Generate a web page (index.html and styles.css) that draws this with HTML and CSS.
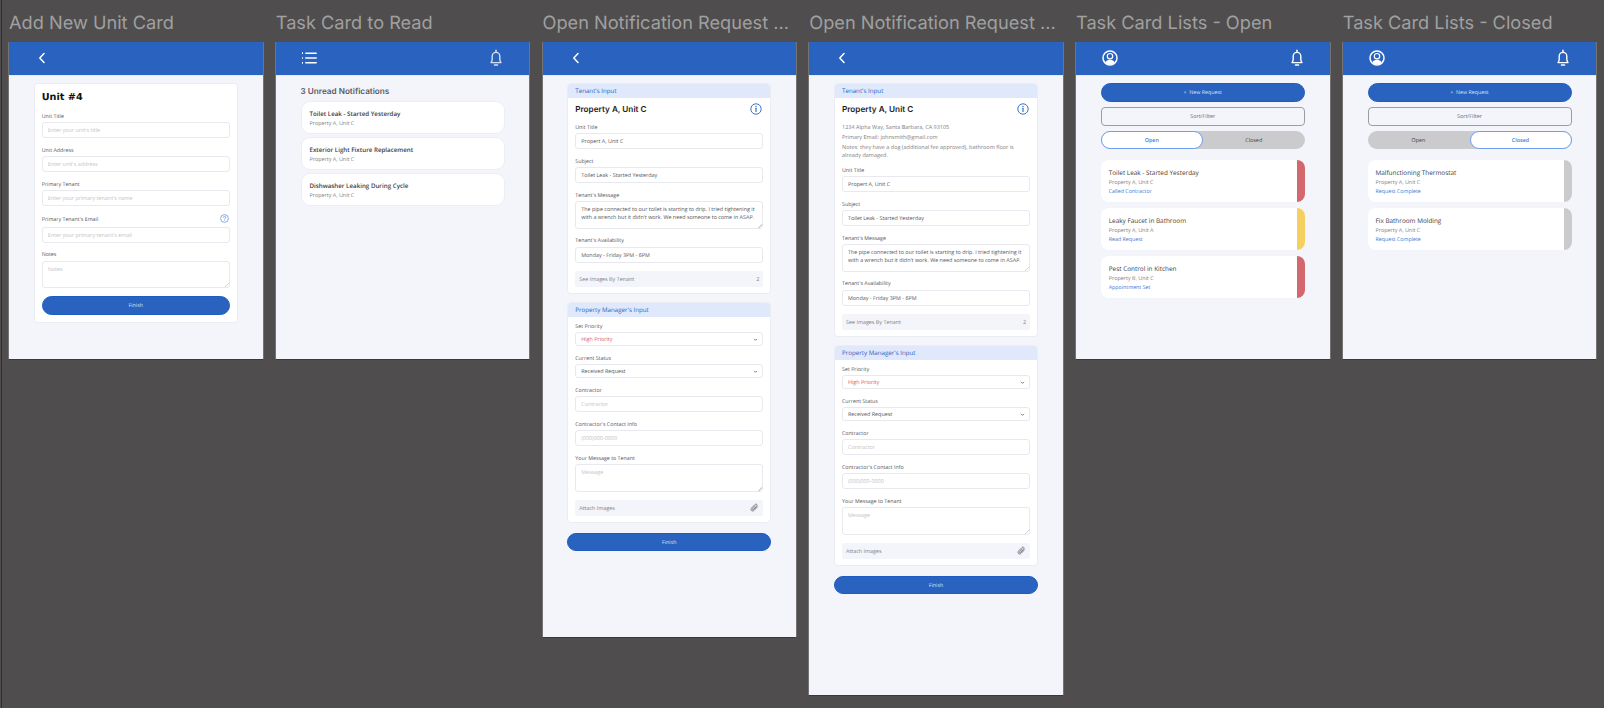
FILE: index.html
```html
<!DOCTYPE html>
<html lang="en">
<head>
    <meta charset="UTF-8">
    <title>Property Manager Screens</title>
    <link rel="stylesheet" href="styles.css">
</head>
<body>
    <svg class="sprites" aria-hidden="true">
        <symbol id="i-back" viewBox="0 0 14 14"><path d="M9 2.500 4.800 7 9 11.500" fill="none" stroke="currentColor" stroke-width="1.500" stroke-linecap="round" stroke-linejoin="round"/></symbol>
        <symbol id="i-list" viewBox="0 0 16 14"><path d="M4.800 2.200h10.400M4.800 7h10.400M4.800 11.800h10.400" fill="none" stroke="currentColor" stroke-width="1.500" stroke-linecap="round"/><path d="M1 2.200h1M1 7h1M1 11.800h1" fill="none" stroke="currentColor" stroke-width="1.700"/></symbol>
        <symbol id="i-bell" viewBox="0 0 14 18"><path d="M2 13.600c.8-.9 1.200-1.700 1.200-3.400V7.200a3.800 3.800 0 0 1 7.600 0v3c0 1.700.4 2.500 1.200 3.400z" fill="none" stroke="currentColor" stroke-width="1.400" stroke-linejoin="round"/><path d="M7 1.200v1.800" stroke="currentColor" stroke-width="1.400" stroke-linecap="round"/><path d="M5.600 16h2.800" stroke="currentColor" stroke-width="1.700" stroke-linecap="round"/></symbol>
        <symbol id="i-user" viewBox="0 0 16 16"><circle cx="8" cy="8" r="7" fill="none" stroke="currentColor" stroke-width="1.500"/><circle cx="8" cy="6.200" r="2.700" fill="none" stroke="currentColor" stroke-width="1.200"/><path d="M3.300 12.400c.7-1.800 2.500-2.700 4.700-2.700s4 .9 4.700 2.700A6.500 6.500 0 0 1 8 14.500a6.500 6.500 0 0 1-4.700-2.100z" fill="currentColor"/></symbol>
        <symbol id="i-info" viewBox="0 0 12 12"><circle cx="6" cy="6" r="5.200" fill="none" stroke="currentColor" stroke-width=".9"/><path d="M6 5.300v3.200" stroke="currentColor" stroke-width="1.100" stroke-linecap="round"/><circle cx="6" cy="3.500" r=".7" fill="currentColor"/></symbol>
        <symbol id="i-help" viewBox="0 0 12 12"><circle cx="6" cy="6" r="5.200" fill="none" stroke="currentColor" stroke-width=".8"/><path d="M4.400 4.700a1.600 1.500 0 1 1 2.400 1.300c-.6.300-.8.600-.8 1.200" fill="none" stroke="currentColor" stroke-width=".9"/><circle cx="6" cy="8.800" r=".55" fill="currentColor"/></symbol>
        <symbol id="i-clip" viewBox="0 0 10 10"><path d="M8.300 4.300 4.600 8.100c-1 1-2.300 1-3 .3s-.7-2 .3-3l3.500-3.600c.7-.7 1.600-.7 2.100-.2s.5 1.400-.2 2.100L3.900 7.200c-.3.300-.8.300-1 .1s-.2-.7.100-1l3-3.100" fill="none" stroke="currentColor" stroke-width="1" stroke-linecap="round"/></symbol>
        <symbol id="i-down" viewBox="0 0 6 6"><path d="M1.200 2.200 3 4l1.800-1.800" fill="none" stroke="currentColor" stroke-width=".9"/></symbol>
    </svg>

    <main class="canvas">
        <!-- Add New Unit Card -->
        <section class="frame">
            <h2 class="frame-title">Add New Unit Card</h2>
            <div class="screen screen-short">
                <header class="topbar"><svg class="icon"><use href="#i-back"/></svg></header>
                <div class="body">
                    <form class="card unit-card">
                        <h3 class="unit-name">Unit #4</h3>
                        <div class="field"><label>Unit Title</label><input placeholder="Enter your unit's title"></div>
                        <div class="field"><label>Unit Address</label><input placeholder="Enter unit's address"></div>
                        <div class="field"><label>Primary Tenant</label><input placeholder="Enter your primary tenant's name"></div>
                        <div class="field"><label class="with-help">Primary Tenant's Email <svg class="help"><use href="#i-help"/></svg></label><input placeholder="Enter your primary tenant's email"></div>
                        <div class="field"><label>Notes</label><textarea placeholder="Notes"></textarea></div>
                        <button type="button" class="btn-primary">Finish</button>
                    </form>
                </div>
            </div>
        </section>

        <!-- Task Card to Read -->
        <section class="frame">
            <h2 class="frame-title">Task Card to Read</h2>
            <div class="screen screen-short">
                <header class="topbar"><svg class="icon icon-list"><use href="#i-list"/></svg><svg class="icon icon-bell bell-dim"><use href="#i-bell"/></svg></header>
                <div class="body">
                    <h3 class="unread-title">3 Unread Notifications</h3>
                    <div class="notice"><div class="task-name">Toilet Leak - Started Yesterday</div><div class="task-unit">Property A, Unit C</div></div>
                    <div class="notice"><div class="task-name">Exterior Light Fixture Replacement</div><div class="task-unit">Property A, Unit C</div></div>
                    <div class="notice"><div class="task-name">Dishwasher Leaking During Cycle</div><div class="task-unit">Property A, Unit C</div></div>
                </div>
            </div>
        </section>

        <!-- Open Notification Request -->
        <section class="frame">
            <h2 class="frame-title">Open Notification Request ...</h2>
            <div class="screen screen-long">
                <header class="topbar"><svg class="icon"><use href="#i-back"/></svg></header>
                <div class="body">
                    <div class="card panel">
                        <div class="panel-head">Tenant's Input</div>
                        <div class="panel-body">
                            <div class="prop-row"><h3 class="prop-name">Property A, Unit C</h3><svg class="info"><use href="#i-info"/></svg></div>
                            <div class="field"><label>Unit Title</label><input value="Propert A, Unit C"></div>
                            <div class="field"><label>Subject</label><input value="Toilet Leak - Started Yesterday"></div>
                            <div class="field"><label>Tenant's Message</label><textarea>The pipe connected to our toilet is starting to drip. I tried tightening it with a wrench but it didn't work. We need someone to come in ASAP.</textarea></div>
                            <div class="field"><label>Tenant's Availability</label><input value="Monday - Friday 3PM - 6PM"></div>
                            <div class="attach"><span>See Images By Tenant</span><span>2</span></div>
                        </div>
                    </div>
                    <div class="card panel">
                        <div class="panel-head">Property Manager's Input</div>
                        <div class="panel-body">
                            <div class="field field-select"><label>Set Priority</label><div class="select-wrap"><select class="high"><option>High Priority</option></select><svg class="caret"><use href="#i-down"/></svg></div></div>
                            <div class="field field-select"><label>Current Status</label><div class="select-wrap"><select><option>Received Request</option></select><svg class="caret"><use href="#i-down"/></svg></div></div>
                            <div class="field"><label>Contractor</label><input placeholder="Contractor"></div>
                            <div class="field"><label>Contractor's Contact Info</label><input placeholder="(000)000-0000"></div>
                            <div class="field"><label>Your Message to Tenant</label><textarea placeholder="Message"></textarea></div>
                            <div class="attach"><span>Attach Images</span><svg class="clip"><use href="#i-clip"/></svg></div>
                        </div>
                    </div>
                    <button type="button" class="btn-primary">Finish</button>
                </div>
            </div>
        </section>

        <!-- Same screen with the info panel opened -->
        <section class="frame">
            <h2 class="frame-title">Open Notification Request ...</h2>
            <div class="screen screen-longest">
                <header class="topbar"><svg class="icon"><use href="#i-back"/></svg></header>
                <div class="body">
                    <div class="card panel">
                        <div class="panel-head">Tenant's Input</div>
                        <div class="panel-body">
                            <div class="prop-row"><h3 class="prop-name">Property A, Unit C</h3><svg class="info"><use href="#i-info"/></svg></div>
                            <div class="prop-info">
                                <p>1234 Alpha Way, Santa Barbara, CA 93105</p>
                                <p>Primary Email: johnsmith@gmail.com</p>
                                <p>Notes: they have a dog (additional fee approved), bathroom floor is already damaged.</p>
                            </div>
                            <div class="field"><label>Unit Title</label><input value="Propert A, Unit C"></div>
                            <div class="field"><label>Subject</label><input value="Toilet Leak - Started Yesterday"></div>
                            <div class="field"><label>Tenant's Message</label><textarea>The pipe connected to our toilet is starting to drip. I tried tightening it with a wrench but it didn't work. We need someone to come in ASAP.</textarea></div>
                            <div class="field"><label>Tenant's Availability</label><input value="Monday - Friday 3PM - 6PM"></div>
                            <div class="attach"><span>See Images By Tenant</span><span>2</span></div>
                        </div>
                    </div>
                    <div class="card panel">
                        <div class="panel-head">Property Manager's Input</div>
                        <div class="panel-body">
                            <div class="field field-select"><label>Set Priority</label><div class="select-wrap"><select class="high"><option>High Priority</option></select><svg class="caret"><use href="#i-down"/></svg></div></div>
                            <div class="field field-select"><label>Current Status</label><div class="select-wrap"><select><option>Received Request</option></select><svg class="caret"><use href="#i-down"/></svg></div></div>
                            <div class="field"><label>Contractor</label><input placeholder="Contractor"></div>
                            <div class="field"><label>Contractor's Contact Info</label><input placeholder="(000)000-0000"></div>
                            <div class="field"><label>Your Message to Tenant</label><textarea placeholder="Message"></textarea></div>
                            <div class="attach"><span>Attach Images</span><svg class="clip"><use href="#i-clip"/></svg></div>
                        </div>
                    </div>
                    <button type="button" class="btn-primary">Finish</button>
                </div>
            </div>
        </section>

        <!-- Task Card Lists - Open -->
        <section class="frame">
            <h2 class="frame-title">Task Card Lists - Open</h2>
            <div class="screen screen-short">
                <header class="topbar"><svg class="icon icon-user"><use href="#i-user"/></svg><svg class="icon icon-bell"><use href="#i-bell"/></svg></header>
                <div class="body body-list">
                    <button type="button" class="btn-primary btn-new">+&nbsp;&nbsp;New Request</button>
                    <button type="button" class="btn-sort">Sort/Filter</button>
                    <div class="toggle"><span class="toggle-item active">Open</span><span class="toggle-item">Closed</span></div>
                    <div class="task"><div class="task-text"><div class="task-name">Toilet Leak - Started Yesterday</div><div class="task-unit">Property A, Unit C</div><div class="task-status">Called Contractor</div></div><div class="flag flag-red"></div></div>
                    <div class="task"><div class="task-text"><div class="task-name">Leaky Faucet in Bathroom</div><div class="task-unit">Property A, Unit A</div><div class="task-status">Read Request</div></div><div class="flag flag-yellow"></div></div>
                    <div class="task"><div class="task-text"><div class="task-name">Pest Control in Kitchen</div><div class="task-unit">Property B, Unit C</div><div class="task-status">Appointment Set</div></div><div class="flag flag-red"></div></div>
                </div>
            </div>
        </section>

        <!-- Task Card Lists - Closed -->
        <section class="frame">
            <h2 class="frame-title">Task Card Lists - Closed</h2>
            <div class="screen screen-short">
                <header class="topbar"><svg class="icon icon-user"><use href="#i-user"/></svg><svg class="icon icon-bell"><use href="#i-bell"/></svg></header>
                <div class="body body-list">
                    <button type="button" class="btn-primary btn-new">+&nbsp;&nbsp;New Request</button>
                    <button type="button" class="btn-sort">Sort/Filter</button>
                    <div class="toggle"><span class="toggle-item">Open</span><span class="toggle-item active">Closed</span></div>
                    <div class="task"><div class="task-text"><div class="task-name">Malfunctioning Thermostat</div><div class="task-unit">Property A, Unit C</div><div class="task-status">Request Complete</div></div><div class="flag flag-grey"></div></div>
                    <div class="task"><div class="task-text"><div class="task-name">Fix Bathroom Molding</div><div class="task-unit">Property A, Unit C</div><div class="task-status">Request Complete</div></div><div class="flag flag-grey"></div></div>
                </div>
            </div>
        </section>
    </main>
</body>
</html>
```

FILE: styles.css
```css
:root {
    --canvas: #4f4d4e;
    --blue: #2a63bf;
    --blue-light: #dfe9fb;
    --link: #3a78d8;
    --page: #f3f5fa;
    --line: #e8e9ee;
    --text: #55555a;
    --muted: #808086;
    --hint: #c4c4c9;
    --grey: #cbcbcd;
}

* {
    box-sizing: border-box;
    text-rendering: geometricPrecision;
}

body {
    margin: 0;
    height: 708px;
    overflow: hidden;
    background: var(--canvas);
    font-family: "Open Sans", sans-serif;
    color: var(--text);
}

.sprites {
    display: none;
}

.canvas {
    height: 708px;
    margin-left: 1px;
    padding-left: 7px;
    border-left: 1px solid #2f2f2f;
    display: flex;
    align-items: flex-start;
    gap: 13.25px;
}

.frame {
    width: 253.5px;
    flex: none;
}

.frame-title {
    margin: 0;
    height: 42px;
    line-height: 46px;
    font-family: Inter, sans-serif;
    font-size: 18.2px;
    font-weight: 400;
    color: #a0a0a0;
    white-space: nowrap;
}

.screen {
    background: var(--page);
    box-shadow: -.5px 0 0 #999, .5px 0 0 #999, 0 1px 0 #383838;
}

.screen-short { height: 317px; }
.screen-long { height: 595px; }
.screen-longest { height: 653px; }

.topbar {
    height: 33.5px;
    padding: 0 26px;
    display: flex;
    align-items: center;
    justify-content: space-between;
    background: var(--blue);
    border-bottom: 1px solid #e3e9f5;
    color: #fff;
}

.icon {
    width: 14px;
    height: 14px;
}

.icon-list { width: 16px; height: 14px; margin-left: -1px; }
.icon-bell { width: 14px; height: 18px; }
.icon-user { width: 16px; height: 16px; }
.bell-dim { opacity: .8; }

.body {
    padding: 7.5px 24.75px 0;
}

/* cards and form fields */
.card {
    background: #fff;
    border: 1px solid #ebedf3;
    border-radius: 4px;
}

.unit-card {
    padding: 6px 7px 7px;
}

.unit-name {
    margin: 0 0 5.5px;
    font-family: "DejaVu Sans", sans-serif;
    font-size: 9.7px;
    line-height: 15px;
    color: #111;
}

.field {
    margin-bottom: 6.5px;
}

.field label {
    display: block;
    height: 10px;
    margin-bottom: 1.5px;
    font-size: 5.3px;
    line-height: 10px;
    color: var(--text);
}

.field .with-help {
    height: 12px;
    margin-bottom: 2px;
    display: flex;
    justify-content: space-between;
    align-items: center;
}

.help {
    width: 9px;
    height: 9px;
    margin-right: 1px;
    color: var(--link);
}

.field input,
.field textarea,
.field select {
    display: block;
    width: 100%;
    padding: 0 5px;
    height: 16px;
    border: 1px solid var(--line);
    border-radius: 3px;
    background: #fff;
    font-family: inherit;
    font-size: 5.4px;
    color: var(--text);
    outline: none;
}

.field textarea {
    height: 27.5px;
    padding: 4px 5px;
    line-height: 7.5px;
    overflow: hidden;
}

textarea::-webkit-resizer {
    background: linear-gradient(135deg, transparent 84%, #d4d4d8 84%, #d4d4d8 90%, transparent 90%);
}

.field select {
    height: 14px;
    appearance: none;
}

.field select.high { color: #d4606a; }

::placeholder {
    color: var(--hint);
    opacity: 1;
}

.select-wrap {
    position: relative;
}

.caret {
    position: absolute;
    top: 4.5px;
    right: 5.5px;
    width: 5px;
    height: 5px;
    color: #555;
}

.btn-primary {
    display: block;
    width: 100%;
    height: 18.5px;
    padding: 0;
    border: 1px solid #1e5cc0;
    border-radius: 9.5px;
    background: var(--blue);
    font-family: inherit;
    font-size: 5.3px;
    color: #d8e2f5;
}

.unit-card .btn-primary { margin-top: 8px; }
.panel + .panel + .btn-primary { margin-top: 9.5px; }

/* tenant / manager panels */
.panel {
    margin-bottom: 8px;
    overflow: hidden;
}

.panel-head {
    height: 13.5px;
    padding-left: 7px;
    background: var(--blue-light);
    font-size: 6.2px;
    font-weight: 500;
    line-height: 13.5px;
    color: var(--blue);
}

.panel-body {
    padding: 4px 7px 6.5px;
}

.prop-row {
    height: 15px;
    margin-bottom: 5px;
    display: flex;
    align-items: center;
    justify-content: space-between;
}

.prop-name {
    margin: 0;
    font-family: Inter, sans-serif;
    font-size: 8.2px;
    font-weight: 600;
    color: #1c1c1e;
}

.info {
    width: 12px;
    height: 12px;
    margin-right: 1px;
    color: var(--blue);
}

.prop-info {
    margin: 6px 0;
    font-size: 5.5px;
    line-height: 8px;
    color: var(--muted);
}

.prop-info p {
    margin: 0 0 2px;
}

.attach {
    height: 15.5px;
    margin-top: 8.5px;
    padding: 0 4px;
    display: flex;
    align-items: center;
    justify-content: space-between;
    background: var(--page);
    border-radius: 2px;
    font-size: 5.4px;
    color: var(--muted);
}

.clip {
    width: 9px;
    height: 9px;
    color: #70707a;
}

/* notifications */
.unread-title {
    margin: .5px 0 3.5px;
    font-family: Inter, sans-serif;
    font-size: 8.2px;
    font-weight: 600;
    line-height: 14px;
    color: #5b5b63;
}

.notice {
    height: 32.5px;
    margin-bottom: 3.7px;
    padding: 6.5px 8px 0;
    background: #fff;
    border: 1px solid #eceef3;
    border-radius: 9px;
}

.task-name {
    font-size: 6.2px;
    font-weight: 600;
    line-height: 10px;
    color: #3c3c40;
}

.task-unit {
    font-size: 5.4px;
    line-height: 9px;
    color: var(--muted);
}

.task-status {
    font-size: 5.3px;
    line-height: 9px;
    color: var(--link);
}

/* open and closed lists */
.btn-sort {
    display: block;
    width: 100%;
    height: 19px;
    margin-top: 5px;
    border: 1px solid #9c9ca3;
    border-radius: 4px;
    background: transparent;
    font-family: inherit;
    font-size: 5.4px;
    color: #6a6a70;
}

.toggle {
    height: 18.5px;
    margin: 5px 0 10.5px;
    display: flex;
    background: var(--grey);
    border-radius: 9.5px;
}

.toggle-item {
    flex: 1;
    border: 1px solid transparent;
    border-radius: 9.5px;
    font-size: 5.4px;
    line-height: 16.5px;
    text-align: center;
    color: #444;
}

.toggle-item.active {
    background: #fff;
    border-color: #6f9ff0;
    font-weight: 600;
    color: #3d7fe8;
}

.task {
    height: 42.5px;
    margin-bottom: 5.5px;
    display: flex;
    background: #fff;
    border-radius: 8px;
    overflow: hidden;
}

.task-text {
    flex: 1;
    padding: 7.5px 8px 0;
}

.task .task-name { font-size: 6.4px; font-weight: 500; line-height: 11px; }

.flag {
    width: 8px;
}

.flag-red { background: #d0686e; }
.flag-yellow { background: #f5cf60; }
.flag-grey { background: var(--grey); }
```
